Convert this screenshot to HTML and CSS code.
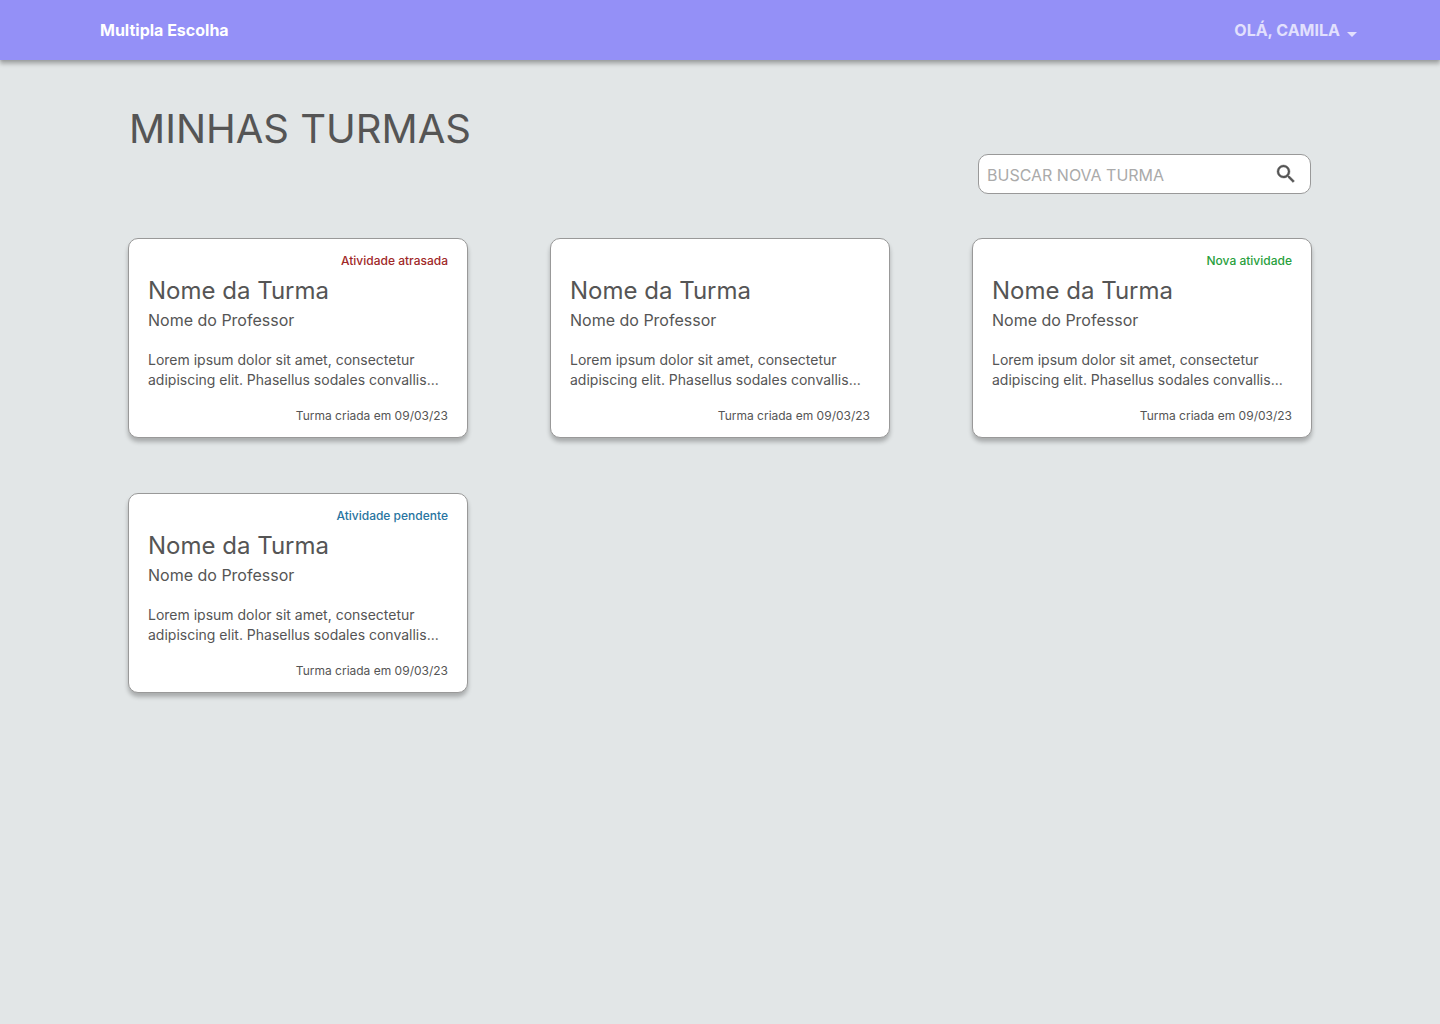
FILE: index.html
```html
<!DOCTYPE html>
<html lang="pt-BR">
<head>
  <meta charset="utf-8">
  <meta name="viewport" content="width=device-width, initial-scale=1">
  <title>Multipla Escolha</title>
  <link rel="stylesheet" href="styles.css">
</head>
<body>
  <header class="topbar">
    <a class="brand" href="#">Multipla Escolha</a>
    <button class="user-menu" type="button" aria-haspopup="true">
      OLÁ, CAMILA
      <svg class="caret" viewBox="0 0 24 24" aria-hidden="true"><path d="M7 10l5 5 5-5z" fill="currentColor"/></svg>
    </button>
  </header>

  <main class="page">
    <h1 class="page-title">MINHAS TURMAS</h1>

    <form class="search" role="search">
      <input class="search-input" type="search" placeholder="BUSCAR NOVA TURMA" aria-label="Buscar nova turma">
      <button class="search-button" type="submit" aria-label="Buscar">
        <svg class="search-icon" viewBox="0 0 24 24" aria-hidden="true"><path fill="currentColor" stroke="currentColor" stroke-width=".4" d="M15.5 14h-.79l-.28-.27A6.471 6.471 0 0 0 16 9.5 6.5 6.5 0 1 0 9.500 16c1.610 0 3.090-.590 4.230-1.570l.270.280v.790l5 4.990L20.490 19l-4.990-5zm-6 0C7.010 14 5 11.990 5 9.500S7.010 5 9.500 5 14 7.010 14 9.500 11.990 14 9.500 14z"/></svg>
      </button>
    </form>

    <section class="classes" aria-label="Minhas turmas">
      <article class="card">
        <p class="status status-late">Atividade atrasada</p>
        <h2 class="card-title">Nome da Turma</h2>
        <p class="teacher">Nome do Professor</p>
        <p class="description">Lorem ipsum dolor sit amet, consectetur adipiscing elit. Phasellus sodales convallis...</p>
        <p class="created">Turma criada em 09/03/23</p>
      </article>
      <article class="card">
        <p class="status"></p>
        <h2 class="card-title">Nome da Turma</h2>
        <p class="teacher">Nome do Professor</p>
        <p class="description">Lorem ipsum dolor sit amet, consectetur adipiscing elit. Phasellus sodales convallis...</p>
        <p class="created">Turma criada em 09/03/23</p>
      </article>
      <article class="card">
        <p class="status status-new">Nova atividade</p>
        <h2 class="card-title">Nome da Turma</h2>
        <p class="teacher">Nome do Professor</p>
        <p class="description">Lorem ipsum dolor sit amet, consectetur adipiscing elit. Phasellus sodales convallis...</p>
        <p class="created">Turma criada em 09/03/23</p>
      </article>
      <article class="card">
        <p class="status status-pending">Atividade pendente</p>
        <h2 class="card-title">Nome da Turma</h2>
        <p class="teacher">Nome do Professor</p>
        <p class="description">Lorem ipsum dolor sit amet, consectetur adipiscing elit. Phasellus sodales convallis...</p>
        <p class="created">Turma criada em 09/03/23</p>
      </article>
    </section>
  </main>
</body>
</html>
```
FILE: styles.css
```css
* {
  box-sizing: border-box;
}

body {
  margin: 0;
  background: #e2e6e7;
  color: #555;
  font-family: Inter, "Liberation Sans", sans-serif;
  font-size: 16px;
  font-optical-sizing: none;
}

h1, h2, p {
  margin: 0;
  font-weight: 400;
}

button, input {
  border: 0;
  padding: 0;
  background: none;
  color: inherit;
  font: inherit;
}

.topbar {
  display: flex;
  align-items: center;
  justify-content: space-between;
  height: 60px;
  padding: 0 76px 0 100px;
  background: #9490f7;
  box-shadow: 0 4px 4px rgba(0, 0, 0, 0.25), 0 1px 2px rgba(0, 0, 0, 0.1);
}

.brand {
  color: #fff;
  font-weight: 700;
  text-decoration: none;
}

.user-menu {
  display: flex;
  align-items: center;
  color: #e2e0fd;
  font-weight: 700;
  cursor: pointer;
}

.caret {
  width: 24px;
  height: 24px;
  margin-top: 7px;
}

.page {
  padding: 44px 128px 56px;
}

.page-title {
  padding-left: 1px;
  font-size: 40px;
  line-height: 50px;
}

.search {
  display: flex;
  align-items: center;
  width: 333px;
  height: 40px;
  margin: 0 1px 44px auto;
  padding: 0 12px 0 8px;
  border: 1px solid #999;
  border-radius: 10px;
  background: #fff;
}

.search-input {
  flex: 1;
  min-width: 0;
  outline: 0;
  padding-top: 2px;
  appearance: none;
}

.search-input::placeholder {
  color: #aaa;
  opacity: 1;
}

.search-button {
  display: flex;
  color: #555;
  cursor: pointer;
}

.search-icon {
  width: 24px;
  height: 24px;
}

.classes {
  display: grid;
  grid-template-columns: repeat(auto-fill, minmax(300px, 1fr));
  gap: 55px 82px;
}

.card {
  display: flex;
  flex-direction: column;
  min-height: 200px;
  padding: 14px 19px 12px;
  border: 1px solid #999;
  border-radius: 10px;
  background: #fff;
  box-shadow: 0 4px 4px rgba(0, 0, 0, 0.25);
}

.status {
  height: 16px;
  font-size: 12px;
  font-weight: 500;
  line-height: 16px;
  text-align: right;
}

.status-late {
  color: #a02828;
}

.status-new {
  color: #28a03c;
}

.status-pending {
  color: #2874a0;
}

.card-title {
  margin-top: 6px;
  font-size: 24px;
  line-height: 32px;
}

.teacher {
  margin-top: 1px;
  line-height: 24px;
}

.description {
  margin-top: 18px;
  font-size: 14px;
  line-height: 20px;
}

.created {
  margin-top: auto;
  font-size: 12px;
  line-height: 18px;
  text-align: right;
}
```
